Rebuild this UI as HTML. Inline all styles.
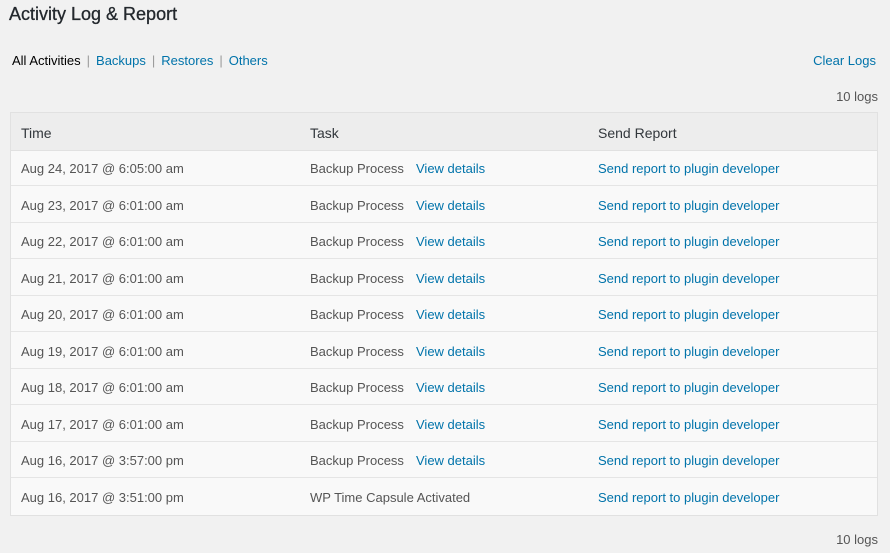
<!DOCTYPE html>
<html><head><style>
body{margin:0;width:890px;height:553px;background:#f1f1f1;font-family:"Liberation Sans",sans-serif;font-size:13px;color:#555;position:relative;overflow:hidden}
.a{position:absolute;white-space:nowrap}
a{color:#0073aa;text-decoration:none}
h1{position:absolute;left:9px;top:4px;margin:0;font-size:18px;font-weight:normal;color:#23282d;-webkit-text-stroke:0.3px #23282d}
.sep{color:#999;margin:0 6px}
.tbl{position:absolute;left:10px;top:112px;width:866px;height:402px;border:1px solid #e1e1e1;background:#f9f9f9}
.hd{position:absolute;left:0;top:0;width:866px;height:37px;background:#ededed;border-bottom:1px solid #e1e1e1;color:#32373c;font-size:14px}
.r{position:absolute;left:0;width:866px;border-bottom:1px solid #e5e5e5;height:36px}
.c{position:absolute;top:12px;white-space:nowrap}
</style></head><body>
<h1>Activity Log &amp; Report</h1>
<div class="a" style="left:12px;top:53px;color:#000">All Activities<span class="sep">|</span><a>Backups</a><span class="sep">|</span><a>Restores</a><span class="sep">|</span><a>Others</a></div>
<div class="a" style="right:14px;top:53px"><a>Clear Logs</a></div>
<div class="a" style="right:12px;top:89px">10 logs</div>
<div class="tbl">
<div class="hd"><span class="c" style="left:10px;top:12px">Time</span><span class="c" style="left:299px;top:12px">Task</span><span class="c" style="left:587px;top:12px">Send Report</span></div>
</div>
<div class="a" style="right:12px;top:532px">10 logs</div>
<div style="position:absolute;left:11px;top:149px;width:866px">
<div class="r" style="top:0"><span class="c" style="left:10px">Aug 24, 2017 @ 6:05:00 am</span><span class="c" style="left:299px">Backup Process</span><a class="c" style="left:405px">View details</a><a class="c" style="left:587px">Send report to plugin developer</a></div>
<div class="r" style="top:36.5px"><span class="c" style="left:10px">Aug 23, 2017 @ 6:01:00 am</span><span class="c" style="left:299px">Backup Process</span><a class="c" style="left:405px">View details</a><a class="c" style="left:587px">Send report to plugin developer</a></div>
<div class="r" style="top:73px"><span class="c" style="left:10px">Aug 22, 2017 @ 6:01:00 am</span><span class="c" style="left:299px">Backup Process</span><a class="c" style="left:405px">View details</a><a class="c" style="left:587px">Send report to plugin developer</a></div>
<div class="r" style="top:109.5px"><span class="c" style="left:10px">Aug 21, 2017 @ 6:01:00 am</span><span class="c" style="left:299px">Backup Process</span><a class="c" style="left:405px">View details</a><a class="c" style="left:587px">Send report to plugin developer</a></div>
<div class="r" style="top:146px"><span class="c" style="left:10px">Aug 20, 2017 @ 6:01:00 am</span><span class="c" style="left:299px">Backup Process</span><a class="c" style="left:405px">View details</a><a class="c" style="left:587px">Send report to plugin developer</a></div>
<div class="r" style="top:182.5px"><span class="c" style="left:10px">Aug 19, 2017 @ 6:01:00 am</span><span class="c" style="left:299px">Backup Process</span><a class="c" style="left:405px">View details</a><a class="c" style="left:587px">Send report to plugin developer</a></div>
<div class="r" style="top:219px"><span class="c" style="left:10px">Aug 18, 2017 @ 6:01:00 am</span><span class="c" style="left:299px">Backup Process</span><a class="c" style="left:405px">View details</a><a class="c" style="left:587px">Send report to plugin developer</a></div>
<div class="r" style="top:255.5px"><span class="c" style="left:10px">Aug 17, 2017 @ 6:01:00 am</span><span class="c" style="left:299px">Backup Process</span><a class="c" style="left:405px">View details</a><a class="c" style="left:587px">Send report to plugin developer</a></div>
<div class="r" style="top:292px"><span class="c" style="left:10px">Aug 16, 2017 @ 3:57:00 pm</span><span class="c" style="left:299px">Backup Process</span><a class="c" style="left:405px">View details</a><a class="c" style="left:587px">Send report to plugin developer</a></div>
<div class="r" style="top:328.5px;border-bottom:none"><span class="c" style="left:10px">Aug 16, 2017 @ 3:51:00 pm</span><span class="c" style="left:299px">WP Time Capsule Activated</span><a class="c" style="left:587px">Send report to plugin developer</a></div>
</div>
</body></html>
